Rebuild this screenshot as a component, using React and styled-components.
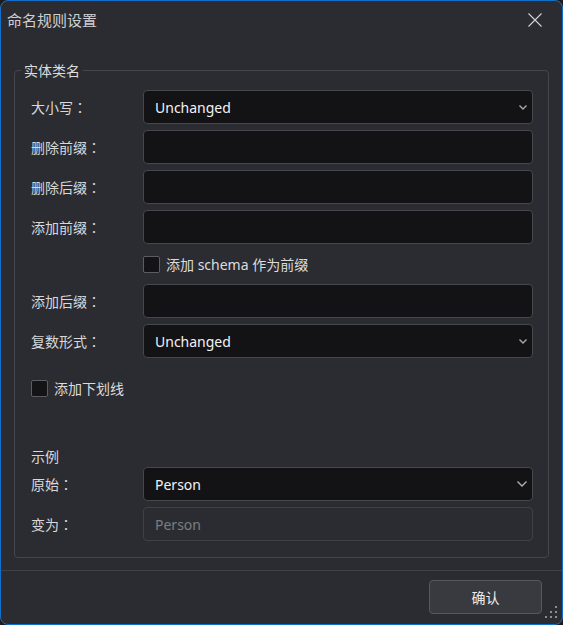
import React from 'react'
import styled, { createGlobalStyle } from 'styled-components'

const GlobalStyle = createGlobalStyle`
  html, body {
    margin: 0;
    padding: 0;
    background: #1c1c1f;
  }
  * {
    box-sizing: border-box;
  }
`

const FONT = `"Noto Sans", "Noto Sans CJK SC", sans-serif`
const CJK = `"Noto Sans CJK SC", "Noto Sans", sans-serif`

function Chevron({ big }) {
  return big ? (
    <svg width="10" height="6" viewBox="0 0 10 6">
      <path d="M0.5 0.5 L5 5 L9.5 0.5" fill="none" stroke="#b4b4b8" strokeWidth="1.3" />
    </svg>
  ) : (
    <svg width="8" height="5" viewBox="0 0 8 5">
      <path d="M0.5 0.5 L4 4 L7.5 0.5" fill="none" stroke="#a9a9ad" strokeWidth="1.4" />
    </svg>
  )
}

function CloseIcon() {
  return (
    <svg width="14" height="14" viewBox="0 0 14 14">
      <path d="M0.5 0.5 L13.5 13.5 M13.5 0.5 L0.5 13.5" stroke="#d2d2d4" strokeWidth="1.1" />
    </svg>
  )
}

function Grip() {
  const dots = [[10, 0], [5, 5], [10, 5], [0, 10], [5, 10], [10, 10]]
  return (
    <GripSvg width="12" height="12" viewBox="0 0 12 12">
      {dots.map(([x, y]) => (
        <rect key={`${x}-${y}`} x={x} y={y} width="2" height="2" fill="#8c8d91" />
      ))}
    </GripSvg>
  )
}

function Field({ label, value, select, big, disabled, placeholder }) {
  return (
    <Row>
      <Label>
        {label}
        <Colon>：</Colon>
      </Label>
      <Input $disabled={disabled}>
        <InputText $muted={!!placeholder}>{value || placeholder}</InputText>
        {select && <Chevron big={big} />}
      </Input>
    </Row>
  )
}

function Check({ label, indent, top }) {
  return (
    <CheckRow $indent={indent} $top={top}>
      <Box />
      <span>{label}</span>
    </CheckRow>
  )
}

function App() {
  return (
    <>
      <GlobalStyle />
      <Window>
        <TitleBar>
          <Title>命名规则设置</Title>
          <CloseButton>
            <CloseIcon />
          </CloseButton>
        </TitleBar>
        <Body>
          <Group>
            <Legend>实体类名</Legend>
            <Rows>
              <Field label="大小写" value="Unchanged" select />
              <Field label="删除前缀" />
              <Field label="删除后缀" />
              <Field label="添加前缀" />
              <Check label="添加 schema 作为前缀" indent />
              <Field label="添加后缀" />
              <Field label="复数形式" value="Unchanged" select />
              <Check label="添加下划线" top={16} />
              <Section>示例</Section>
              <Field label="原始" value="Person" select big />
              <Field label="变为" placeholder="Person" disabled />
            </Rows>
          </Group>
        </Body>
        <Footer>
          <Button>确认</Button>
        </Footer>
        <Grip />
      </Window>
    </>
  )
}

const Window = styled.div`
  position: relative;
  width: 563px;
  height: 625px;
  display: flex;
  flex-direction: column;
  background: #2b2c31;
  border: 1px solid #1170cc;
  border-radius: 8px;
  font-family: ${FONT};
  font-size: 14px;
  color: #d8d8da;
  overflow: hidden;
`

const TitleBar = styled.div`
  height: 38px;
  flex: none;
  display: flex;
  align-items: center;
  justify-content: space-between;
  padding: 0 20px 0 6px;
`

const Title = styled.div`
  font-family: ${CJK};
  font-size: 15px;
  color: #cfcfd2;
  line-height: 20px;
`

const CloseButton = styled.div`
  display: flex;
  align-items: center;
  justify-content: center;
  width: 14px;
  height: 14px;
  margin-top: -1px;
`

const Body = styled.div`
  flex: 1;
  padding: 21px 13px 0 13px;
`

const Group = styled.fieldset`
  margin: 0;
  min-width: 0;
  padding: 10px 15px 16px 6px;
  border: 1px solid #45464c;
  border-radius: 4px;
`

const Legend = styled.legend`
  padding: 0 3px;
  font-family: ${CJK};
  font-size: 14px;
  line-height: 20px;
  color: #dcdcde;
`

const Rows = styled.div`
  display: flex;
  flex-direction: column;
  padding-left: 10px;
`

const Row = styled.div`
  display: flex;
  align-items: center;
  margin-top: 6px;
  &:first-child {
    margin-top: 0;
  }
`

const Label = styled.div`
  width: 112px;
  flex: none;
  font-family: ${CJK};
  line-height: 20px;
`

const Colon = styled.span`
  font-family: "Noto Sans CJK JP", "Noto Sans CJK SC", sans-serif;
`

const Input = styled.div`
  flex: 1;
  height: 34px;
  display: flex;
  align-items: center;
  justify-content: space-between;
  padding: 0 5px 0 11px;
  background: ${p => (p.$disabled ? '#2b2c31' : '#131316')};
  border: 1px solid ${p => (p.$disabled ? '#404147' : '#46474d')};
  border-radius: 4px;
`

const InputText = styled.span`
  color: ${p => (p.$muted ? '#7c7d82' : '#f2f2f4')};
  font-size: 14px;
`

const CheckRow = styled.div`
  display: flex;
  align-items: center;
  gap: 6px;
  height: 28px;
  margin-top: ${p => (p.$top ? `${p.$top}px` : '6px')};
  padding-left: ${p => (p.$indent ? '112px' : '0')};
  color: #dcdcde;
`

const Box = styled.span`
  width: 17px;
  height: 17px;
  background: #141417;
  border: 1px solid #5c5d63;
  border-radius: 2px;
`

const Section = styled.div`
  margin-top: 44px;
  font-family: ${CJK};
  line-height: 20px;
  margin-bottom: -5px;
`

const Footer = styled.div`
  flex: none;
  display: flex;
  justify-content: flex-end;
  border-top: 1px solid #404147;
  padding: 9px 20px 10px;
`

const Button = styled.div`
  width: 113px;
  height: 34px;
  display: flex;
  align-items: center;
  justify-content: center;
  background: #383a40;
  border: 1px solid #56585e;
  border-radius: 4px;
  color: #ececee;
  font-family: ${CJK};
  font-size: 14px;
`

const GripSvg = styled.svg`
  position: absolute;
  right: 5px;
  bottom: 6px;
`

export default App
